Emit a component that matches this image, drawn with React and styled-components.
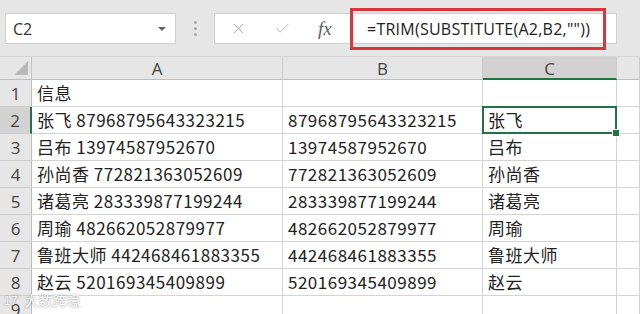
import styled, { createGlobalStyle } from 'styled-components';
import { X, Check } from 'lucide-react';

const GlobalStyle = createGlobalStyle`
  html, body {
    margin: 0;
    padding: 0;
    background: #ffffff;
    overflow: hidden;
  }
  * { box-sizing: border-box; }
`;

const rows = [
  ['信息', '', ''],
  ['张飞 87968795643323215', '87968795643323215', '张飞'],
  ['吕布 13974587952670', '13974587952670', '吕布'],
  ['孙尚香 772821363052609', '772821363052609', '孙尚香'],
  ['诸葛亮 283339877199244', '283339877199244', '诸葛亮'],
  ['周瑜 482662052879977', '482662052879977', '周瑜'],
  ['鲁班大师 442468461883355', '442468461883355', '鲁班大师'],
  ['赵云 520169345409899', '520169345409899', '赵云'],
  ['', '', ''],
];

export default function App() {
  return (
    <Page>
      <GlobalStyle />
      <Toolbar>
        <NameBox>
          <span>C2</span>
          <Caret />
        </NameBox>
        <Grip>
          <i /><i /><i />
        </Grip>
        <FormulaBox>
          <Actions>
            <X size={17} strokeWidth={1.3} />
            <Check size={17} strokeWidth={1.3} />
            <Fx>fx</Fx>
          </Actions>
          <FormulaText>=TRIM(SUBSTITUTE(A2,B2,""))</FormulaText>
        </FormulaBox>
      </Toolbar>

      <Sheet>
        <Corner><Triangle /></Corner>
        <ColHead>A</ColHead>
        <ColHead>B</ColHead>
        <ColHead $active>C</ColHead>
        <ColHead />
        {rows.map((r, i) => (
          <Row key={i} n={i + 1} cells={r} />
        ))}
      </Sheet>

      <Watermark>
        <Badge>17<sup>°</sup></Badge>
        <span>大数跨境</span>
      </Watermark>
    </Page>
  );
}

function Row({ n, cells }) {
  return (
    <>
      <RowHead $active={n === 2}>{n}</RowHead>
      <Cell>{cells[0]}</Cell>
      <Cell>{cells[1]}</Cell>
      <Cell $selected={n === 2}>{cells[2]}</Cell>
      <Cell />
    </>
  );
}

const Page = styled.div`
  position: relative;
  width: 640px;
  height: 314px;
  overflow: hidden;
  font-family: "Noto Sans CJK SC", "Noto Sans", sans-serif;
`;

const Toolbar = styled.div`
  height: 57px;
  background: #e6e6e6;
  display: flex;
  align-items: flex-start;
  padding: 13px 0 0 5px;
  border-bottom: 1px solid #d6d6d6;
`;

const NameBox = styled.div`
  width: 171px;
  height: 31px;
  background: #fff;
  border: 1px solid #d0d0d0;
  display: flex;
  align-items: center;
  justify-content: space-between;
  padding: 0 9px 0 7px;
  font-family: "Open Sans", "Noto Sans", sans-serif;
  font-size: 16px;
  color: #333;
`;

const Caret = styled.span`
  width: 0;
  height: 0;
  border-left: 4px solid transparent;
  border-right: 4px solid transparent;
  border-top: 4px solid #666;
`;

const Grip = styled.div`
  width: 38px;
  height: 31px;
  display: flex;
  flex-direction: column;
  align-items: center;
  justify-content: center;
  gap: 3px;
  i {
    width: 3px;
    height: 3px;
    border-radius: 50%;
    background: #a8a8a8;
  }
`;

const FormulaBox = styled.div`
  width: 403px;
  height: 31px;
  background: #fff;
  border: 1px solid #d0d0d0;
  display: flex;
  align-items: stretch;
  padding-right: 10px;
`;

const Actions = styled.div`
  width: 135px;
  display: flex;
  align-items: center;
  gap: 27px;
  padding-left: 15px;
  color: #a8a8a8;
`;

const Fx = styled.span`
  font-family: "Liberation Serif", "DejaVu Serif", serif;
  font-style: italic;
  font-size: 19px;
  color: #5f5f5f;
`;

const FormulaText = styled.div`
  position: relative;
  flex: 1;
  display: flex;
  align-items: center;
  padding-left: 17px;
  font-family: "Open Sans", "Noto Sans", sans-serif;
  font-size: 16px;
  letter-spacing: 0.25px;
  color: #222;
  &::after {
    content: '';
    position: absolute;
    left: 0;
    right: 0;
    top: -6px;
    bottom: -7px;
    border: 3px solid #d7363f;
  }
`;

const Sheet = styled.div`
  display: grid;
  grid-template-columns: 32px 251px 200px 134px 1fr;
  grid-template-rows: 23px;
  grid-auto-rows: 27px;
  font-size: 17px;
  letter-spacing: 0.5px;
  color: #222;
`;

const Corner = styled.div`
  background: #e6e6e6;
  border-right: 1px solid #c4c4c4;
  border-bottom: 1px solid #bdbdbd;
  position: relative;
`;

const Triangle = styled.div`
  position: absolute;
  right: 3px;
  bottom: 4px;
  width: 14px;
  height: 14px;
  background: #b9b9b9;
  clip-path: polygon(100% 0, 100% 100%, 0 100%);
`;

const ColHead = styled.div`
  background: ${p => (p.$active ? '#d2d2d2' : '#e6e6e6')};
  border-right: 1px solid #cbcbcb;
  border-bottom: ${p => (p.$active ? '2px solid #217346' : '1px solid #bdbdbd')};
  display: flex;
  align-items: center;
  justify-content: center;
  font-family: "Open Sans", "Noto Sans", sans-serif;
  font-size: 17px;
  letter-spacing: 0;
  color: #444;
  padding-top: ${p => (p.$active ? '1px' : '0')};
`;

const RowHead = styled.div`
  background: ${p => (p.$active ? '#d2d2d2' : '#e6e6e6')};
  border-right: ${p => (p.$active ? '2px solid #217346' : '1px solid #bdbdbd')};
  border-bottom: 1px solid #cfcfcf;
  display: flex;
  align-items: center;
  justify-content: center;
  font-family: "Open Sans", "Noto Sans", sans-serif;
  font-size: 17px;
  letter-spacing: 0;
  color: #444;
`;

const Cell = styled.div`
  position: relative;
  border-right: 1px solid #d4d4d4;
  border-bottom: 1px solid #d4d4d4;
  padding-left: 5px;
  line-height: 26px;
  white-space: nowrap;
  overflow: visible;
  ${p => p.$selected && `
    &::after {
      content: '';
      position: absolute;
      left: -1px;
      top: -1px;
      right: -1px;
      bottom: -1px;
      border: 2px solid #217346;
    }
    &::before {
      content: '';
      position: absolute;
      right: -4px;
      bottom: -4px;
      width: 6px;
      height: 6px;
      background: #217346;
      border: 1px solid #fff;
      z-index: 1;
    }
  `}
`;

const Watermark = styled.div`
  position: absolute;
  left: 4px;
  bottom: 4px;
  display: flex;
  align-items: center;
  gap: 4px;
  color: rgba(255, 255, 255, 0.9);
  font-size: 14px;
  text-shadow: 0 0 2px rgba(0, 0, 0, 0.45);
`;

const Badge = styled.span`
  font-family: "Liberation Sans", sans-serif;
  font-size: 12px;
  sup { font-size: 8px; }
`;
